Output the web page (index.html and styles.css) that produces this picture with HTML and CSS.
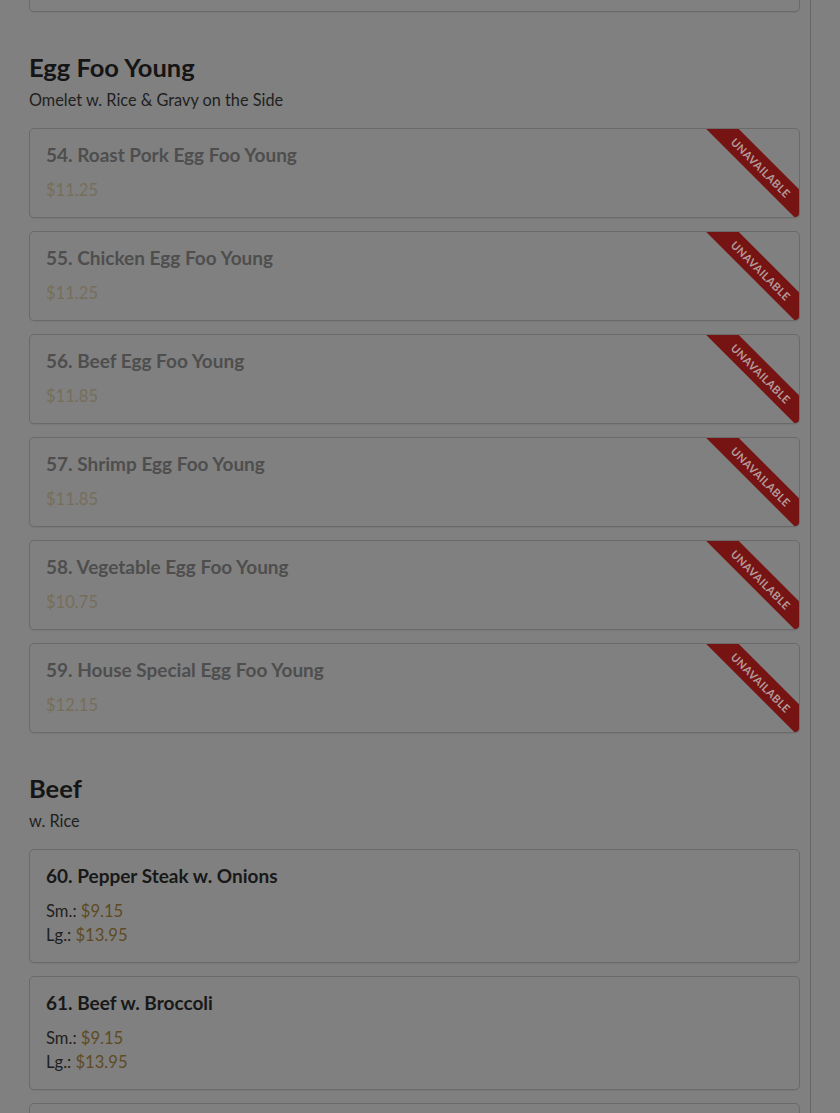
FILE: index.html
```html
<!DOCTYPE html>
<html lang="en">
<head>
<meta charset="utf-8">
<title>Menu</title>
<link rel="stylesheet" href="styles.css">
</head>
<body>
<div class="page">
  <main class="menu">
    <div class="card card-tail"></div>

    <section class="section">
      <h2 class="section-title">Egg Foo Young</h2>
      <p class="section-desc">Omelet w. Rice &amp; Gravy on the Side</p>
      <div class="items">
        <div class="card unavailable">
          <div class="item-name">54. Roast Pork Egg Foo Young</div>
          <div class="price-line"><span class="price">$11.25</span></div>
          <div class="ribbon">UNAVAILABLE</div>
        </div>
        <div class="card unavailable">
          <div class="item-name">55. Chicken Egg Foo Young</div>
          <div class="price-line"><span class="price">$11.25</span></div>
          <div class="ribbon">UNAVAILABLE</div>
        </div>
        <div class="card unavailable">
          <div class="item-name">56. Beef Egg Foo Young</div>
          <div class="price-line"><span class="price">$11.85</span></div>
          <div class="ribbon">UNAVAILABLE</div>
        </div>
        <div class="card unavailable">
          <div class="item-name">57. Shrimp Egg Foo Young</div>
          <div class="price-line"><span class="price">$11.85</span></div>
          <div class="ribbon">UNAVAILABLE</div>
        </div>
        <div class="card unavailable">
          <div class="item-name">58. Vegetable Egg Foo Young</div>
          <div class="price-line"><span class="price">$10.75</span></div>
          <div class="ribbon">UNAVAILABLE</div>
        </div>
        <div class="card unavailable">
          <div class="item-name">59. House Special Egg Foo Young</div>
          <div class="price-line"><span class="price">$12.15</span></div>
          <div class="ribbon">UNAVAILABLE</div>
        </div>
      </div>
    </section>

    <section class="section">
      <h2 class="section-title">Beef</h2>
      <p class="section-desc">w. Rice</p>
      <div class="items">
        <div class="card">
          <div class="item-name">60. Pepper Steak w. Onions</div>
          <div class="price-line">Sm.: <span class="price">$9.15</span></div>
          <div class="price-line">Lg.: <span class="price">$13.95</span></div>
        </div>
        <div class="card">
          <div class="item-name">61. Beef w. Broccoli</div>
          <div class="price-line">Sm.: <span class="price">$9.15</span></div>
          <div class="price-line">Lg.: <span class="price">$13.95</span></div>
        </div>
        <div class="card card-peek"></div>
      </div>
    </section>
  </main>
</div>
</body>
</html>
```

FILE: styles.css
```css
html, body {
  margin: 0;
  padding: 0;
  background: #808080;
  height: 1113px;
  overflow: hidden;
}

body {
  font-family: Lato, "Noto Sans", "Liberation Sans", sans-serif;
  color: #1e1e1e;
}

.page {
  display: flex;
}

.menu {
  width: 771px;
  padding: 0 10px 0 29px;
  border-right: 1px solid #666666;
  min-height: 1113px;
  box-sizing: content-box;
}

.card {
  position: relative;
  overflow: hidden;
  border: 1px solid #6a6a6a;
  border-radius: 5px;
  padding: 15px 16px;
  box-shadow: 0 1px 1px rgba(0, 0, 0, 0.06);
}

.card-tail {
  height: 11px;
  padding: 0;
  border-top: none;
  border-radius: 0 0 5px 5px;
}

.card-peek {
  height: 20px;
  padding: 0;
}

.section {
  margin-top: 40px;
}

.section-title {
  margin: 0;
  font-size: 25.5px;
  line-height: 30px;
  font-weight: 700;
  color: #151515;
}

.section-desc {
  margin: 7px 0 17px;
  font-size: 16.3px;
  line-height: 22px;
  color: #1f1f1f;
}

.items {
  display: flex;
  flex-direction: column;
  gap: 13px;
}

.item-name {
  font-size: 19px;
  line-height: 22px;
  font-weight: 700;
  color: #181818;
  margin-bottom: 12px;
}

.price-line {
  font-size: 16.6px;
  line-height: 24px;
  color: #202020;
}

.price {
  color: #5e4b22;
}

.unavailable .item-name {
  color: #4e4e4e;
}

.unavailable .price {
  color: #766e5a;
}

.ribbon {
  position: absolute;
  top: 27px;
  right: -62px;
  width: 200px;
  height: 23px;
  background: #761313;
  color: #b39b9b;
  font-size: 11px;
  font-weight: 700;
  letter-spacing: 0.4px;
  line-height: 23px;
  text-align: center;
  transform: rotate(45deg);
}
```
